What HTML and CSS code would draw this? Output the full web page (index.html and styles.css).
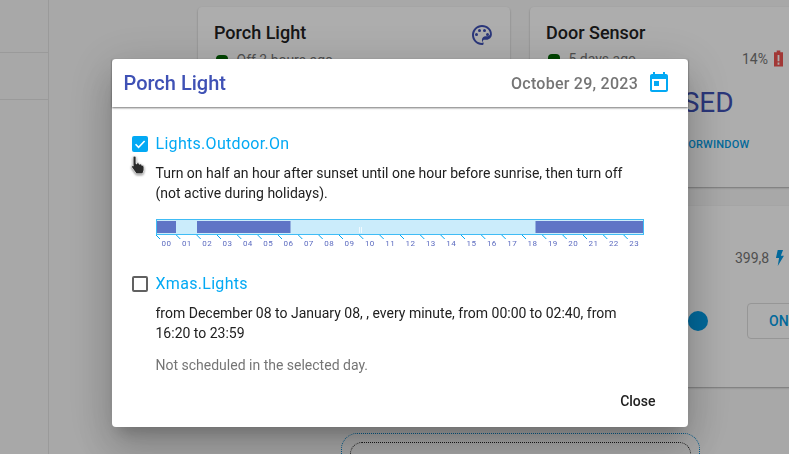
FILE: index.html
```html
<!DOCTYPE html>
<html lang="en">
<head>
<meta charset="utf-8">
<title>Porch Light</title>
<link rel="stylesheet" href="styles.css">
</head>
<body>
<div class="page">
  <aside class="sidebar">
    <div class="side-row"></div>
    <div class="side-row side-row-small"></div>
  </aside>
  <main class="board">
    <section class="card card-porch">
      <div class="card-head">
        <h2>Porch Light</h2>
        <svg class="palette" viewBox="0 0 24 24"><path d="M12 2C6.500 2 2 6.500 2 12s4.500 10 10 10c.9 0 1.600-.7 1.600-1.600 0-.4-.2-.8-.4-1.100-.3-.3-.4-.6-.4-1 0-.9.7-1.600 1.600-1.600h2c3 0 5.500-2.500 5.500-5.500C22 6 17.500 2 12 2zm5.500 11.200h-1.900c-2 0-3.700 1.600-3.700 3.700 0 .8.300 1.500.7 2.100l.1.900c-.3.100-.5.100-.7.100-4.400 0-8-3.600-8-8s3.600-8 8-8 8 3.100 8 7c0 1.200-1.400 2.200-2.500 2.200z"/><circle cx="6.500" cy="11.500" r="1.500"/><circle cx="9.500" cy="7.500" r="1.500"/><circle cx="14.500" cy="7.500" r="1.500"/><circle cx="17.500" cy="11.500" r="1.500"/></svg>
      </div>
      <div class="card-sub"><span class="dot"></span><span>Off 3 hours ago</span></div>
    </section>
    <section class="card card-door">
      <h2>Door Sensor</h2>
      <div class="card-sub"><span class="dot"></span><span class="grow">5 days ago</span><span>14%</span>
        <svg class="battery" viewBox="0 0 10 18"><path d="M3 0h4v2h3v16H0V2h3zM4 5v7h2V5zm0 8.500V16h2v-2.500z"/></svg>
      </div>
      <div class="closed">CLOSED</div>
      <div class="doorlink">DOORWINDOW</div>
    </section>
    <section class="card card-switch">
      <div class="power"><span>399,8</span>
        <svg class="bolt" viewBox="0 0 10 18"><path d="M3 0h6L6.500 6.500H10L3 18l1.500-9H1z"/></svg>
      </div>
      <div class="switch-row">
        <span class="knob"></span>
        <span class="on">ON</span>
      </div>
    </section>
    <div class="dotted-outer"><div class="dotted-inner"></div></div>
  </main>
</div>

<div class="backdrop"></div>

<div class="dialog">
  <header class="dialog-head">
    <h1>Porch Light</h1>
    <span class="date">October 29, 2023</span>
    <svg class="calendar" viewBox="0 0 24 24"><path d="M19 3h-1V1h-2v2H8V1H6v2H5c-1.100 0-2 .9-2 2v14c0 1.100.9 2 2 2h14c1.100 0 2-.9 2-2V5c0-1.100-.9-2-2-2zm0 16H5V8h14v11zM7 10h5v5H7z"/></svg>
  </header>
  <div class="dialog-body">
    <div class="rule">
      <div class="rule-title">
        <span class="check check-on"><svg viewBox="0 0 18 18"><path d="M4 9.300l3.400 3.400L14.200 5.600" /></svg></span>
        <span>Lights.Outdoor.On</span>
      </div>
      <p class="rule-text">Turn on half an hour after sunset until one hour before sunrise, then turn off<br>(not active during holidays).</p>
      <svg class="timeline" viewBox="0 0 490 32" width="490" height="32">
        <rect class="tl-bg" x="0.500" y="0.500" width="487" height="15"/>
        <rect class="tl-on" x="1" y="2" width="19" height="12"/>
        <rect class="tl-on" x="41" y="2" width="93.500" height="12"/>
        <rect class="tl-on" x="379.500" y="2" width="107.500" height="12"/>
        <rect class="tl-gap" x="203" y="8" width="1" height="6"/>
        <rect class="tl-gap" x="205" y="8" width="1" height="6"/>
        <path class="tl-tick" d="M0 16l4 4M20.300 16l4 4M40.700 16l4 4M61 16l4 4M81.300 16l4 4M101.700 16l4 4M122 16l4 4M142.300 16l4 4M162.700 16l4 4M183 16l4 4M203.300 16l4 4M223.700 16l4 4M244 16l4 4M264.300 16l4 4M284.700 16l4 4M305 16l4 4M325.300 16l4 4M345.700 16l4 4M366 16l4 4M386.300 16l4 4M406.700 16l4 4M427 16l4 4M447.300 16l4 4M467.700 16l4 4"/>
        <g class="tl-labels">
          <text x="10.500" y="27">00</text><text x="30.800" y="27">01</text><text x="51.200" y="27">02</text><text x="71.500" y="27">03</text><text x="91.800" y="27">04</text><text x="112.200" y="27">05</text><text x="132.500" y="27">06</text><text x="152.800" y="27">07</text><text x="173.200" y="27">08</text><text x="193.500" y="27">09</text><text x="213.800" y="27">10</text><text x="234.200" y="27">11</text><text x="254.500" y="27">12</text><text x="274.800" y="27">13</text><text x="295.200" y="27">14</text><text x="315.500" y="27">15</text><text x="335.800" y="27">16</text><text x="356.200" y="27">17</text><text x="376.500" y="27">18</text><text x="396.800" y="27">19</text><text x="417.200" y="27">20</text><text x="437.500" y="27">21</text><text x="457.800" y="27">22</text><text x="478.200" y="27">23</text>
        </g>
      </svg>
    </div>
    <div class="rule rule-second">
      <div class="rule-title">
        <span class="check"></span>
        <span>Xmas.Lights</span>
      </div>
      <p class="rule-text">from December 08 to January 08, , every minute, from 00:00 to 02:40, from<br>16:20 to 23:59</p>
      <p class="rule-note">Not scheduled in the selected day.</p>
    </div>
  </div>
  <footer class="dialog-foot"><span class="close">Close</span></footer>
</div>

<svg class="cursor" viewBox="0 0 17 21">
  <path d="M4.500 1.200c.9 0 1.500.6 1.500 1.500v6l1 .1V7.700c.8-.5 1.500-.3 1.800.4l.2 1 .9.100c.7-.4 1.400-.2 1.700.5l.2.700c.8-.3 1.600 0 1.900.7.500 2 .4 4.300-.4 6.100l-.8 1.600H6.300L1.900 12.500c-.5-.7-.4-1.500.2-1.800.7-.3 1.300 0 1 .4V2.700c0-.9.500-1.500 1.400-1.500z"/>
</svg>
</body>
</html>
```

FILE: styles.css
```css
* { box-sizing: border-box; }
html, body { margin: 0; height: 100%; }
body {
  font-family: Roboto, "Liberation Sans", sans-serif;
  overflow: hidden;
  background: #f8f8f8;
}
h1, h2, p { margin: 0; }

.page { display: flex; height: 454px; overflow: hidden; }

.sidebar {
  flex: 0 0 49px;
  padding-top: 52px;
  border-right: 1px solid #e4e4e4;
}
.side-row { height: 47px; border-top: 1px solid #e4e4e4; }
.side-row-small { height: 0; }

.board {
  flex: 1;
  display: grid;
  grid-template-columns: 312px 312px;
  grid-template-rows: 180px 181px auto;
  column-gap: 20px;
  row-gap: 19px;
  padding: 7px 0 0 149px;
  align-content: start;
}
.card {
  background: #fff;
  border-radius: 4px;
  box-shadow: 0 1px 2px rgba(0,0,0,.3);
  padding: 14px 16px;
}
.card h2 { font-size: 18px; font-weight: 500; line-height: 24px; color: #212121; }
.card-head { display: flex; justify-content: space-between; }
.palette { width: 24px; height: 24px; fill: #3f51b5; margin: 2px 0 0 0; flex: none; }
.card-sub {
  display: flex;
  align-items: center;
  gap: 8.500px;
  margin-top: 5px;
  font-size: 14px;
  line-height: 16px;
  color: #757575;
}
.dot { width: 12px; height: 12px; border-radius: 4px; background: #006400; margin-top: 2px; margin-left: 2px; }
.grow { flex: 0 0 165px; }
.battery { width: 9px; height: 17px; fill: #ef5350; margin-left: -3px; }
.closed {
  margin: 20px 0 0 85px;
  font-size: 28px;
  line-height: 32px;
  color: #3f51b5;
}
.doorlink {
  margin: 19px 0 0 127px;
  font-size: 11px;
  line-height: 14px;
  font-weight: 500;
  letter-spacing: .2px;
  color: #039be5;
}

.card-switch { grid-column: 2; padding: 44px 0 0 205px; }
.power { display: flex; align-items: center; gap: 6px; font-size: 14px; line-height: 16px; color: #757575; }
.bolt { width: 9px; height: 16px; fill: #039be5; }
.switch-row { display: flex; align-items: center; gap: 39px; margin: 37px 0 0 -47px; }
.knob { width: 20px; height: 20px; flex: none; border-radius: 50%; background: #039be5; }
.on {
  width: 60px;
  height: 36px;
  flex: none;
  padding: 9px 0 0 21px;
  border: 1px solid #ddd;
  border-radius: 4px;
  color: #039be5;
  font-size: 14px;
  font-weight: 500;
  white-space: nowrap;
}

.dotted-outer {
  grid-column: 1 / span 2;
  grid-row: 3;
  width: 359px;
  height: 80px;
  margin: 27px 0 0 143px;
  padding: 8px;
  border: 1px dotted #0288d1;
  border-radius: 16px;
}
.dotted-inner { height: 80px; border: 1px dotted #222; border-radius: 12px; }

.backdrop { position: fixed; inset: 0; background: rgba(0,0,0,.32); }

.dialog {
  position: fixed;
  left: 112px;
  top: 59px;
  width: 576px;
  height: 368px;
  display: flex;
  flex-direction: column;
  background: #fff;
  border-radius: 4px;
  box-shadow: 0 11px 15px -7px rgba(0,0,0,.2), 0 24px 38px 3px rgba(0,0,0,.14), 0 9px 46px 8px rgba(0,0,0,.12);
}
.dialog-head {
  flex: 0 0 48px;
  display: flex;
  align-items: center;
  padding: 0 17px 0 11.500px;
  box-shadow: 0 1px 2px rgba(0,0,0,.55);
}
.dialog-head h1 { flex: 1; font-size: 20px; font-weight: 500; color: #3f51b5; }
.date { font-size: 16px; font-weight: 500; letter-spacing: .25px; color: #757575; margin-right: 9px; }
.calendar { width: 24px; height: 24px; fill: #03a9f4; }

.dialog-body { flex: 1; padding: 25px 0 0 20px; }
.rule-title {
  display: flex;
  align-items: center;
  gap: 5.500px;
  font-size: 16px;
  line-height: 24px;
  letter-spacing: .3px;
  color: #03a9f4;
}
.check {
  width: 16px;
  height: 16px;
  flex: none;
  margin-right: 2px;
  border: 2px solid #616161;
  border-radius: 2px;
}
.check-on { background: #03a9f4; border: 0; }
.check-on svg { display: block; width: 16px; height: 16px; fill: none; stroke: #fff; stroke-width: 1.800; }
.rule-text {
  margin: 7px 0 0 23.500px;
  font-size: 14px;
  line-height: 20px;
  color: #212121;
}
.timeline { display: block; margin: 16px 0 0 24px; }
.tl-bg { fill: #cbecfb; stroke: #40bcf5; stroke-width: 1; }
.tl-on { fill: #5f75c6; }
.tl-gap { fill: #fff; opacity: .7; }
.tl-tick { fill: none; stroke: #03a9f4; stroke-width: 1; }
.tl-labels text { font-family: Roboto, sans-serif; font-size: 8px; letter-spacing: .4px; text-anchor: middle; fill: #5c6bc0; }
.rule-second { margin-top: 21px; }
.rule-note { margin: 12px 0 0 23.500px; font-size: 14px; line-height: 20px; color: #757575; }

.dialog-foot { flex: none; display: flex; justify-content: flex-end; padding: 0 32.500px 16px 0; }
.close { font-size: 14px; line-height: 20px; font-weight: 500; color: #212121; }

.cursor {
  position: fixed;
  left: 130px;
  top: 155px;
  width: 17px;
  height: 21px;
  fill: #2b2b2b;
  stroke: #fff;
  stroke-width: .7;
  filter: drop-shadow(0 1px 1px rgba(0,0,0,.5));
}
```
